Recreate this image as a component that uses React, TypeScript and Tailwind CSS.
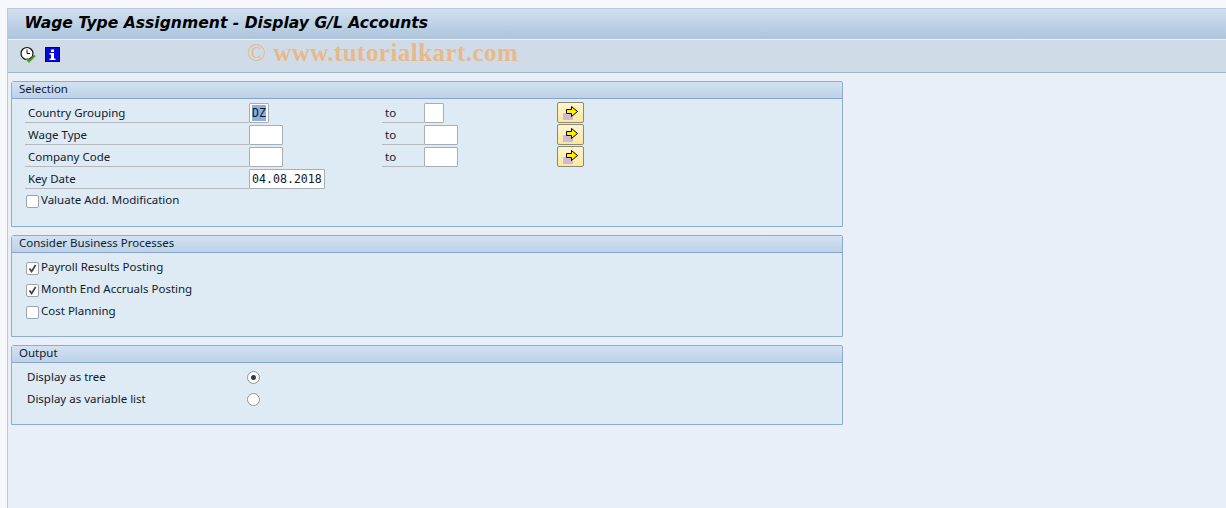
import React from 'react';

const sapFont = "[font-family:'Noto_Sans','DejaVu_Sans',sans-serif]";

const Panel = ({ title, height, children }: { title: string; height: string; children: React.ReactNode }) => (
  <section className={`${height} w-[832px] flex flex-col rounded-tl-[3px] rounded-tr-[2px] border border-[#8dadcf] bg-[#deeaf4]`}>
    <h2 className="h-[17px] shrink-0 border-b border-[#87a5c6] bg-gradient-to-b from-[#d2e2f2] to-[#bcd2e8] pl-[7px] text-[11.5px] leading-[14px] text-[#10202c]">
      {title}
    </h2>
    {children}
  </section>
);

const TextBox = ({ width, value, selected }: { width: string; value?: string; selected?: boolean }) => (
  <div className={`${width} h-[20px] shrink-0 rounded-[1px] border border-[#a8aeb4] bg-white px-[2px] text-[11.6px] leading-[18px] text-[#10202c] [font-family:'DejaVu_Sans_Mono',monospace]`}>
    {selected ? <span className="mt-[1px] block h-[16px] bg-[#8fb0d6] leading-[16px] text-[#0c1a40]">{value}</span> : value}
  </div>
);

const MoreButton = () => (
  <button className="flex h-[21px] w-[27px] items-center justify-center rounded-[2px] border border-[#8b8a78] bg-gradient-to-b from-[#fdf5cf] to-[#fde79b]">
    <svg width="17" height="15" viewBox="0 0 17 15">
      <rect x="1" y="7" width="10" height="8" fill="#cdb9d8" />
      <rect x="1" y="7" width="10" height="1" fill="#f6f0f4" />
      <path d="M4.500 4.500h5V1.500l6 5-6 5v-3h-5z" fill="#ffee00" stroke="#000" strokeWidth="1" />
    </svg>
  </button>
);

const FieldLabel = ({ children }: { children: React.ReactNode }) => (
  <span className="h-[20px] border-b border-[#b5b9bc] pl-[3px] text-[11.5px] leading-[19px]">{children}</span>
);

const SelectionRow = ({ label, low, lowValue, selected, high }: { label: string; low: string; lowValue?: string; selected?: boolean; high: string }) => (
  <div className="grid h-[20px] grid-cols-[224px_133px_42px_133px_27px] items-start pl-[13px]">
    <FieldLabel>{label}</FieldLabel>
    <TextBox width={low} value={lowValue} selected={selected} />
    <FieldLabel>to</FieldLabel>
    <TextBox width={high} />
    <div className="-mt-[1px]">
      <MoreButton />
    </div>
  </div>
);

const Check = ({ label, checked }: { label: string; checked?: boolean }) => (
  <label className="flex h-[22px] items-center pl-[14px] text-[11.5px]">
    <span className="mr-[2px] flex h-[13px] w-[13px] items-center justify-center rounded-[2px] border border-[#9ba3ab] bg-white">
      {checked && (
        <svg width="9" height="9" viewBox="0 0 9 9">
          <path d="M1.500 4.500 3.600 7.500 7.600 1" fill="none" stroke="#39424e" strokeWidth="1.7" />
        </svg>
      )}
    </span>
    <span className="-mt-[2px]">{label}</span>
  </label>
);

const Radio = ({ label, checked }: { label: string; checked?: boolean }) => (
  <div className="flex h-[22px] items-center pl-[15px] text-[11.5px]">
    <span className="-mt-[2px] w-[220px]">{label}</span>
    <span className="-mt-[1px] flex h-[13px] w-[13px] items-center justify-center rounded-full border border-[#8f969c] bg-white">
      {checked && <span className="h-[5px] w-[5px] rounded-full bg-[#33384a]" />}
    </span>
  </div>
);

export default function App() {
  return (
    <div className={`h-[508px] w-[1226px] overflow-hidden bg-[#f6f8fc] pt-[8px] pl-[7px] text-[#10202c] ${sapFont}`}>
      <div className="h-[500px] border-t border-l border-[#bccadb] bg-[#e8eff7]">
        <header className="h-[30px] bg-gradient-to-b from-[#d0e0f0] to-[#adc4dc] pl-[16.500px] text-[15.600px] font-bold italic leading-[28px] text-black [font-family:'DejaVu_Sans',sans-serif]">
          Wage Type Assignment - Display G/L Accounts
        </header>
        <div className="flex h-[34px] items-center border-t border-b border-t-[#edf3f9] border-b-[#a3b5ca] bg-[#cfdce8] pb-[4px] pl-[12px]">
          <svg width="17" height="17" viewBox="0 0 17 17">
            <circle cx="7" cy="7.500" r="6" fill="#fff" stroke="#111" strokeWidth="1.200" />
            <path d="M7 3.500v4h3" fill="none" stroke="#111" strokeWidth="1" />
            <path d="M6.500 12.500l2.500 3 6-6" fill="none" stroke="#4f9a2b" strokeWidth="2" />
          </svg>
          <svg className="ml-[8px]" width="15" height="15" viewBox="0 0 15 15">
            <rect width="15" height="15" fill="#0a0ad8" />
            <rect x="0.500" y="0.500" width="14" height="14" fill="none" stroke="#06064a" />
            <path d="M6 2.500h3v2.500H6zM4.500 6h4.500v5.500h1.500V13h-6v-1.500H6V7.500H4.500z" fill="#fff" />
          </svg>
          <span className="ml-[187px] -mt-[4px] text-[25px] font-bold leading-[25px] tracking-[0.45px] text-[#e8b98a] [font-family:'Liberation_Serif',serif]">
            <span className="font-normal">©</span> www.tutorialkart.com
          </span>
        </div>
        <main className="flex flex-col gap-[8px] pl-[3px] pt-[8px]">
          <Panel title="Selection" height="h-[146px]">
            <div className="flex flex-col gap-[2px] pt-[4px]">
              <SelectionRow label="Country Grouping" low="w-[20px]" lowValue="DZ" selected high="w-[20px]" />
              <SelectionRow label="Wage Type" low="w-[34px]" high="w-[34px]" />
              <SelectionRow label="Company Code" low="w-[34px]" high="w-[34px]" />
              <div className="grid h-[20px] grid-cols-[224px_76px] items-start pl-[13px]">
                <FieldLabel>Key Date</FieldLabel>
                <TextBox width="w-[76px]" value="04.08.2018" />
              </div>
            </div>
            <div className="pt-[1px]">
              <Check label="Valuate Add. Modification" />
            </div>
          </Panel>
          <Panel title="Consider Business Processes" height="h-[102px]">
            <div className="pt-[4px]">
              <Check label="Payroll Results Posting" checked />
              <Check label="Month End Accruals Posting" checked />
              <Check label="Cost Planning" />
            </div>
          </Panel>
          <Panel title="Output" height="h-[80px]">
            <div className="pt-[4px]">
              <Radio label="Display as tree" checked />
              <Radio label="Display as variable list" />
            </div>
          </Panel>
        </main>
      </div>
    </div>
  );
}
